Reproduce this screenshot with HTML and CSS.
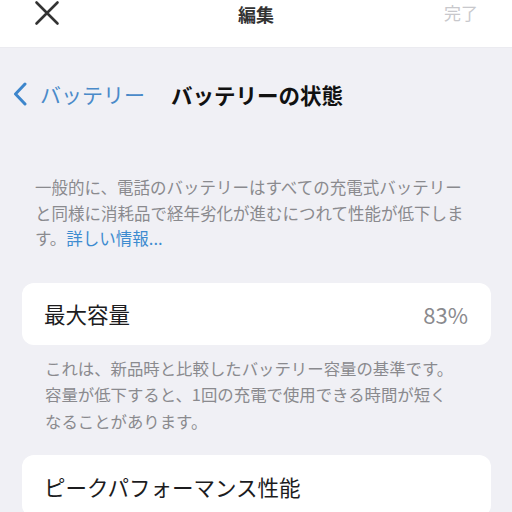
FILE: index.html
```html
<!DOCTYPE html>
<html lang="ja">
<head>
<meta charset="utf-8">
<link rel="stylesheet" href="styles.css">
</head>
<body>
<header class="topbar">
  <svg class="close" width="26" height="26" viewBox="0 0 26 26"><path d="M2.5 2.5 L23.5 23.5 M23.5 2.5 L2.5 23.5" stroke="#333" stroke-width="2.6" stroke-linecap="round" fill="none"/></svg>
  <div class="title">編集</div>
  <div class="done">完了</div>
</header>
<main class="page">
  <nav class="navrow">
    <svg class="chev" width="14" height="24" viewBox="0 0 14 24"><path d="M12 2 L2.5 12 L12 22" stroke="#3d86cc" stroke-width="3" stroke-linecap="round" stroke-linejoin="round" fill="none"/></svg>
    <span class="back">バッテリー</span>
    <span class="navtitle">バッテリーの状態</span>
  </nav>
  <p class="note first">一般的に、電話のバッテリーはすべての充電式バッテリー<br>と同様に消耗品で経年劣化が進むにつれて性能が低下しま<br>す。<span class="link">詳しい情報...</span></p>
  <section class="card">
    <span class="label">最大容量</span>
    <span class="value">83%</span>
  </section>
  <p class="note second">これは、新品時と比較したバッテリー容量の基準です。<br>容量が低下すると、1回の充電で使用できる時間が短く<br>なることがあります。</p>
  <section class="card">
    <span class="label">ピークパフォーマンス性能</span>
  </section>
</main>
</body>
</html>
```
FILE: styles.css
```css
html, body {
  margin: 0;
  padding: 0;
}
body {
  width: 512px;
  height: 512px;
  overflow: hidden;
  background: #f0f0f5;
  font-family: "Noto Sans CJK JP", "Noto Sans", sans-serif;
  color: #1c1c1e;
}
.topbar {
  background: #fff;
  height: 48px;
  display: grid;
  grid-template-columns: 1fr auto 1fr;
  align-items: start;
  padding: 0 34px 0 34px;
  box-sizing: border-box;
  border-bottom: 1px solid #ebebf0;
}
.title {
  font-size: 18px;
  font-weight: 700;
  color: #333;
  line-height: 28px;
}
.done {
  justify-self: end;
  font-size: 17px;
  color: #c8c8cc;
  line-height: 26px;
}
.page {
  display: flex;
  flex-direction: column;
}
.navrow {
  display: flex;
  align-items: center;
  height: 48px;
  margin-top: 22px;
  padding-left: 13px;
}
.back {
  margin-left: 13px;
  font-size: 21px;
  color: #4a8ac9;
}
.navtitle {
  margin-left: 26px;
  font-size: 21.5px;
  font-weight: 700;
  color: #111;
}
.note {
  margin: 0;
  color: #8a8a8e;
}
.note.first {
  margin-top: 57px;
  padding-left: 35px;
  font-size: 16.5px;
  line-height: 25.5px;
}
.link {
  color: #3d8bd0;
}
.card {
  margin: 0 21px 0 22px;
  height: 62px;
  background: #fff;
  border-radius: 12px;
  display: flex;
  align-items: center;
  justify-content: space-between;
  padding: 0 22px;
  flex-shrink: 0;
}
.note.first + .card {
  margin-top: 31px;
}
.label {
  font-size: 21.5px;
  color: #1c1c1e;
}
.value {
  font-size: 22px;
  color: #8a8a8e;
  padding-right: 1px;
}
.note.second {
  margin-top: 10px;
  padding-left: 45px;
  font-size: 16.4px;
  line-height: 26.5px;
}
.note.second + .card {
  margin-top: 21px;
}
```
